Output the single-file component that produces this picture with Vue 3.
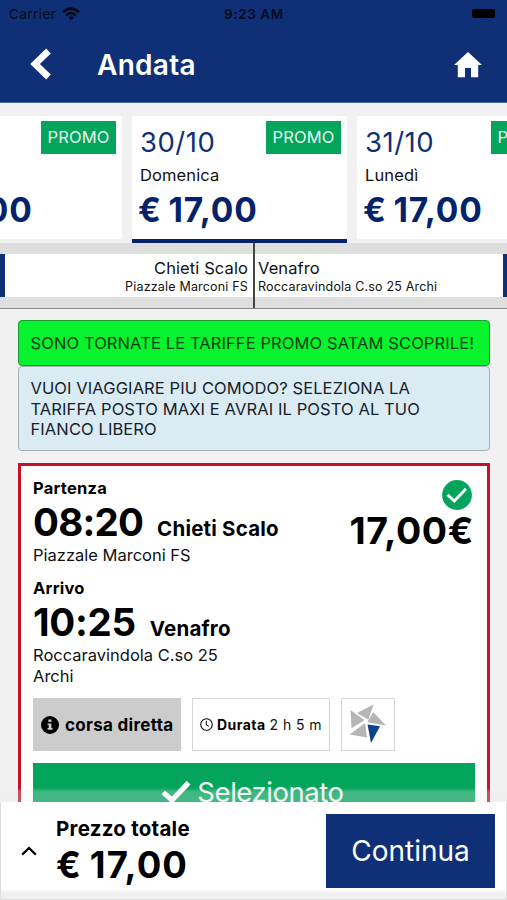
<script setup>
const dates = [
  { date: '', day: '', price: '€ 17,00', active: false },
  { date: '30/10', day: 'Domenica', price: '€ 17,00', active: true },
  { date: '31/10', day: 'Lunedì', price: '€ 17,00', active: false },
]
</script>

<template>
  <div class="app">
    <header>
      <div class="status">
        <span class="carrier">Carrier</span>
        <svg class="wifi" viewBox="0 0 18 14" width="18" height="14">
          <path d="M1 5.2Q9-2 17 5.2M4 8.4Q9 4 14 8.4" fill="none" stroke="#050b1c" stroke-width="2.6" />
          <path d="M6.2 10.4Q9 8.2 11.8 10.4L9 13.4Z" fill="#050b1c" />
        </svg>
        <span class="clock">9:23 AM</span>
        <span class="battery"></span>
      </div>
      <div class="nav">
        <svg class="back" viewBox="0 0 22 34" width="22" height="34">
          <path d="M18.5 3L5 16L18.5 29" fill="none" stroke="#fff" stroke-width="6.6" />
        </svg>
        <h1>Andata</h1>
        <svg class="home" viewBox="0 0 28 26" width="28" height="26">
          <path d="M14 0L28 13H24.2V25.2H17V16H11V25.2H3.8V13H0Z" fill="#fff" />
        </svg>
      </div>
    </header>

    <div class="dates">
      <div v-for="(d, i) in dates" :key="i" class="date" :class="{ active: d.active }">
        <div class="date-top">
          <span class="dm">{{ d.date }}</span>
          <span class="promo">PROMO</span>
        </div>
        <div class="day">{{ d.day }}</div>
        <div class="fare">{{ d.price }}</div>
      </div>
    </div>

    <div class="route">
      <div class="stop from">
        <div><span class="city">Chieti Scalo</span></div>
        <div><span class="addr">Piazzale Marconi FS</span></div>
      </div>
      <div class="stop to">
        <div><span class="city">Venafro</span></div>
        <div><span class="addr">Roccaravindola C.so 25 Archi</span></div>
      </div>
    </div>

    <main>
      <div class="notice green"><span>SONO TORNATE LE TARIFFE PROMO SATAM SCOPRILE!</span></div>
      <div class="notice blue">
        <span>VUOI VIAGGIARE PIU COMODO? SELEZIONA LA<br />TARIFFA POSTO MAXI E AVRAI IL POSTO AL TUO<br />FIANCO LIBERO</span>
      </div>

      <section class="trip">
        <div class="legs">
          <div class="leg-list">
            <div class="leg">
              <div class="label">Partenza</div>
              <div class="when"><span class="time">08:20</span><span class="place">Chieti Scalo</span></div>
              <div class="where">Piazzale Marconi FS</div>
            </div>
            <div class="leg">
              <div class="label">Arrivo</div>
              <div class="when"><span class="time arrival">10:25</span><span class="place">Venafro</span></div>
              <div class="where">Roccaravindola C.so 25<br />Archi</div>
            </div>
          </div>
          <div class="cost">
            <svg viewBox="0 0 30 30" width="30" height="30">
              <circle cx="15" cy="15" r="14.9" fill="#03a45c" />
              <path d="M5.5 14.8L12.3 21L24 8.7" fill="none" stroke="#fff" stroke-width="2.8" />
            </svg>
            <span class="amount">17,00€</span>
          </div>
        </div>

        <div class="chips">
          <div class="chip direct">
            <svg viewBox="0 0 18 18" width="18" height="18">
              <circle cx="9" cy="9" r="9" />
              <path d="M7.4 3.4H10.4V6H7.4ZM6.6 7.4H10.4V12H11.5V13.8H6.6V12H7.7V9.1H6.6Z" fill="#ccc" />
            </svg>
            <b>corsa diretta</b>
          </div>
          <div class="chip duration">
            <svg viewBox="0 0 14 14" width="13" height="13">
              <circle cx="7" cy="7" r="6.2" fill="none" stroke="#111" stroke-width="1.2" />
              <path d="M6.8 3V7.3L9.5 9" fill="none" stroke="#111" stroke-width="1.1" />
            </svg>
            <b>Durata</b><span>2 h 5 m</span>
          </div>
          <div class="chip logo">
            <svg viewBox="0 0 37 39" width="37" height="39">
              <path d="M24.6 .6L19.4 15.5L8 9Z" fill="#b5b5b5" />
              <path d="M1.5 6L15.5 16.3L2.5 24.2Z" fill="#b5b5b5" />
              <path d="M24.2 8L37 21.5L18.2 18.2Z" fill="#b5b5b5" />
              <path d="M.5 30.6L16 19L18 33.5Z" fill="#b5b5b5" />
              <path d="M18.5 20.6L31 22.2L22 39Z" fill="#0a438c" />
            </svg>
          </div>
        </div>

        <button class="selected">
          <svg viewBox="0 0 30 24" width="30" height="24">
            <path d="M2.2 12.4L11 20.2L27.6 2.6" fill="none" stroke="#fff" stroke-width="5.2" />
          </svg>
          <span>Selezionato</span>
        </button>
      </section>
    </main>

    <footer>
      <svg class="up" viewBox="0 0 16 10" width="16" height="10">
        <path d="M1.2 8.6L8 2L14.8 8.6" fill="none" stroke="#000" stroke-width="2.2" />
      </svg>
      <div class="total">
        <div class="total-label">Prezzo totale</div>
        <div class="total-value">€ 17,00</div>
      </div>
      <button class="continue">Continua</button>
    </footer>
  </div>
</template>

<style>
body {
  background: #f1f1f1;
}
</style>

<style scoped>
.app {
  width: 507px;
  height: 900px;
  position: relative;
  overflow: hidden;
  background: #f1f1f1;
  font-family: Inter, "Liberation Sans", sans-serif;
  color: #111;
  white-space: nowrap;
}
.app * {
  box-sizing: border-box;
}
button {
  border: 0;
  padding: 0;
  font: inherit;
}
svg {
  display: block;
  flex: none;
}
header {
  height: 103px;
  background: #0f3077;
  border-bottom: 1px solid #4967a0;
}
.status {
  height: 27px;
  display: grid;
  grid-template-columns: 53px 154px auto 1fr;
  align-items: center;
  padding: 0 12px 0 9px;
  font-size: 13.5px;
  color: #050b1c;
}
.carrier {
  letter-spacing: 0.45px;
}
.clock {
  font-weight: 600;
  padding-left: 8px;
  letter-spacing: 0.6px;
}
.battery {
  justify-self: end;
  width: 23px;
  height: 9px;
  border-radius: 2px;
  background: #000;
}
.nav {
  height: 75px;
  display: flex;
  align-items: center;
  padding: 0 25px 0 30px;
}
h1 {
  margin: 0 auto 0 45px;
  font-size: 28px;
  line-height: 34px;
  font-weight: 600;
  letter-spacing: 0.3px;
  color: #fff;
}
.dates {
  height: 140px;
  padding-top: 13px;
  display: flex;
  gap: 10px;
  margin-left: -93px;
  width: 693px;
}
.date {
  width: 215px;
  flex: none;
  height: 123px;
  background: #fff;
  padding: 5px 6px 0 8px;
}
.date.active {
  height: 127px;
  border-bottom: 4px solid #04236b;
}
.date-top {
  display: flex;
  justify-content: space-between;
  height: 42px;
}
.dm {
  font-size: 27.5px;
  line-height: 42px;
  letter-spacing: 0.5px;
  color: #0f3077;
}
.promo {
  width: 75px;
  height: 33px;
  background: #03a45c;
  color: #e4f7ed;
  font-size: 16.5px;
  letter-spacing: 0.1px;
  line-height: 33px;
  text-align: center;
}
.day {
  height: 24px;
  font-size: 16.5px;
  line-height: 24px;
  letter-spacing: 0.12px;
}
.fare {
  font-size: 33.5px;
  line-height: 47px;
  font-weight: 700;
  color: #04236b;
  margin-left: -2px;
  letter-spacing: 0.8px;
  word-spacing: -2px;
}
.route {
  height: 66px;
  background: #dedede;
  border-bottom: 1px solid #8b8b8b;
  display: flex;
}
.stop {
  height: 65px;
  padding: 16px 3px 0;
  line-height: 18px;
}
.from {
  width: 255px;
  border-right: 2px solid #444;
  background: linear-gradient(#0f3077, #0f3077) 0 11px / 5px 43px no-repeat, linear-gradient(#fff, #fff) 0 11px / 100% 43px no-repeat;
  text-align: right;
  padding-right: 5px;
}
.to {
  width: 252px;
  background: linear-gradient(#0f3077, #0f3077) 100% 11px / 4px 43px no-repeat, linear-gradient(#fff, #fff) 0 11px / 100% 43px no-repeat;
}
.stop div + div {
  margin-top: -1px;
}
.city {
  font-size: 16.5px;
  letter-spacing: 0.1px;
}
.addr {
  font-size: 12.5px;
  letter-spacing: 0.18px;
}
main {
  padding: 11px 17px 0 18px;
}
.notice {
  border: 1px solid #a6afb4;
  border-radius: 4px;
  font-size: 16.5px;
  line-height: 20.6px;
  letter-spacing: 0.1px;
  padding: 12px 11.5px 0;
}
.green {
  height: 46px;
  background: #08f22d;
  border-color: #169f37;
  color: #07400f;
}
.blue {
  height: 85px;
  padding-top: 11px;
  background: #dbebf4;
  color: #14212a;
}
.trip {
  margin-top: 12px;
  height: 400px;
  background: #fff;
  border: 3px solid #c6112b;
  padding: 0 12px;
}
.legs {
  display: flex;
  justify-content: space-between;
  height: 232px;
}
.leg {
  height: 100px;
  padding-top: 11px;
}
.label {
  font-size: 16.5px;
  line-height: 22px;
  font-weight: 700;
  letter-spacing: 0.25px;
  color: #000;
}
.when {
  height: 46px;
  line-height: 46px;
  display: flex;
  align-items: baseline;
  color: #000;
  font-weight: 700;
}
.time {
  font-size: 38.5px;
  margin-right: 14px;
  letter-spacing: -0.8px;
}
.arrival {
  letter-spacing: -0.3px;
}
.place {
  font-size: 20.5px;
  letter-spacing: 0.2px;
}
.where {
  font-size: 16.5px;
  line-height: 20.6px;
}
.cost {
  display: flex;
  flex-direction: column;
  align-items: flex-end;
  padding: 14px 1px 0 0;
}
.cost svg {
  margin-right: 2px;
}
.amount {
  font-size: 37.5px;
  line-height: 42px;
  font-weight: 700;
  letter-spacing: 0.6px;
  color: #000;
}
.chips {
  display: flex;
  gap: 12px;
  height: 53px;
}
.chip {
  height: 53px;
  display: flex;
  align-items: center;
  border: 1px solid #d6d6d6;
}
.chip b {
  font-weight: 700;
  color: #000;
}
.direct {
  width: 148px;
  background: #ccc;
  border-color: #ccc;
  padding-left: 7px;
  gap: 6px;
  font-size: 17px;
  letter-spacing: 0.3px;
}
.duration {
  width: 138px;
  margin-left: -1px;
  padding-left: 7px;
  gap: 4px;
  font-size: 14px;
  letter-spacing: 0.45px;
}
.logo {
  width: 54px;
  margin-left: -1px;
  padding-left: 7px;
}
.logo svg {
  margin-top: -2px;
}
.selected {
  margin-top: 12px;
  width: 442px;
  height: 60px;
  background: #03a45c;
  color: #f1fbf5;
  font-size: 27.5px;
  letter-spacing: -0.45px;
  display: flex;
  justify-content: center;
  align-items: center;
  gap: 6px;
  padding: 0 3px 2px 0;
}
footer {
  position: absolute;
  left: 0;
  right: 0;
  bottom: 0;
  height: 98px;
  background: linear-gradient(#fff 0 86px, #f0f0f0 90px);
  border: 1px solid #dedede;
  border-top-color: #fff;
  display: flex;
  padding: 11px 11px 0 20px;
}
footer::before {
  content: "";
  position: absolute;
  left: -1px;
  right: -1px;
  top: -15px;
  height: 14px;
  background: linear-gradient(rgba(236, 236, 236, 0.02), rgba(236, 236, 236, 0.27) 4px);
}
.up {
  margin-top: 32px;
}
.total {
  margin: 0 auto 0 19px;
  font-weight: 700;
  color: #000;
}
.total-label {
  font-size: 20.5px;
  line-height: 30px;
  letter-spacing: 0.25px;
}
.total-value {
  font-size: 36.5px;
  line-height: 42px;
  letter-spacing: 1.1px;
  word-spacing: -2px;
}
.continue {
  width: 169px;
  height: 74px;
  background: #0f3077;
  color: #fff;
  font-size: 28px;
}
</style>
